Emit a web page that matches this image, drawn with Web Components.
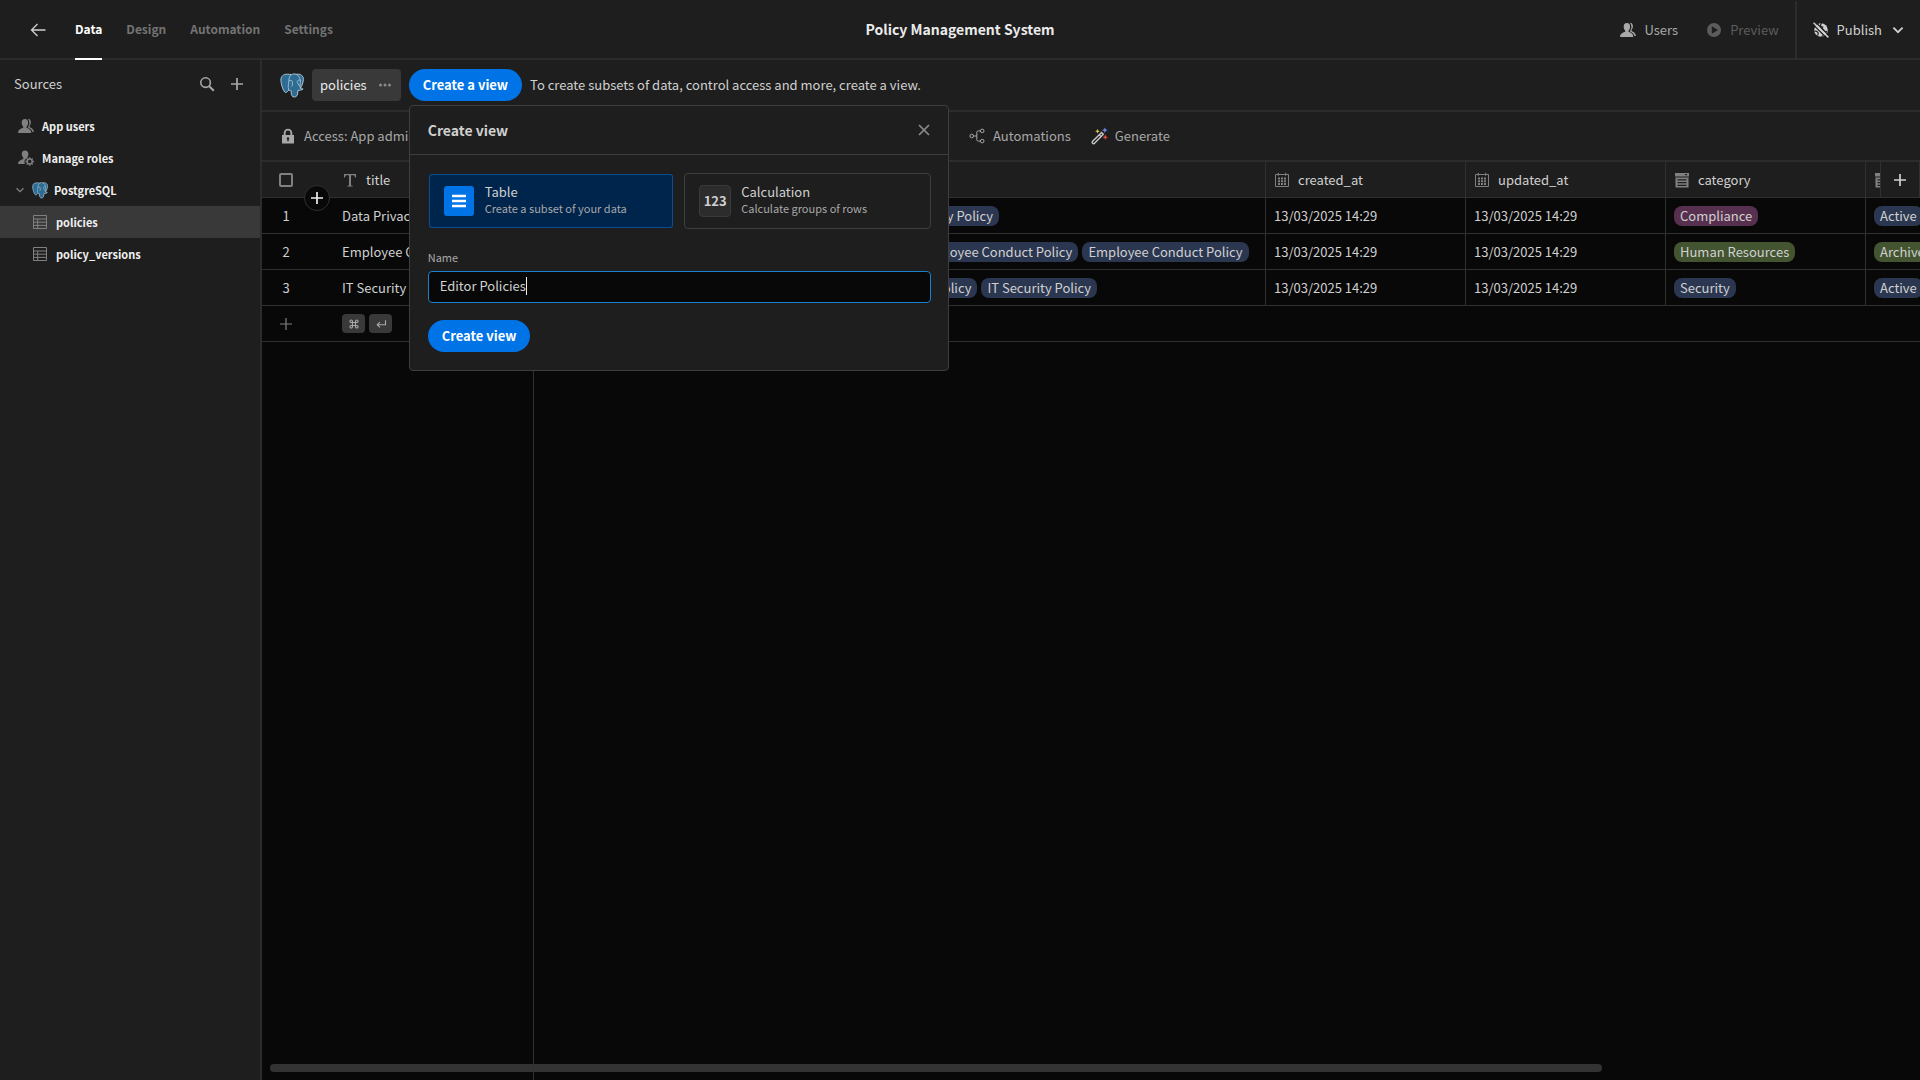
<!DOCTYPE html>
<html lang="en">
<head>
<meta charset="utf-8">
<title>Policy Management System</title>
<style>
:root {
	--bg-panel: #1e1e1e;
	--bg-grid: #080808;
	--bg-raised: #393939;
	--border: #2c2c2c;
	--border-strong: #3e3e3e;
	--text: #d0d0d0;
	--text-bright: #ebebeb;
	--text-muted: #a8a8a8;
	--text-dim: #737373;
	--accent: #0073e6;
	--size-s: 11px;
	--size-tab: 12px;
	--size-m: 13px;
	--size-l: 14px;
}

html, body {
	height: 100%;
	margin: 0;
}

body {
	background: var(--bg-grid);
	color: var(--text);
	font: 400 13px/20px "Noto Sans CJK SC", "Open Sans", sans-serif;
	overflow: hidden;
}
</style>
</head>
<body>
<policy-app></policy-app>

<script>
(() => {

const reset = `
* {
	box-sizing: border-box;
}

button, input {
	margin: 0;
	padding: 0;
	border: 0;
	background: none;
	color: inherit;
	font: inherit;
}

button {
	cursor: pointer;
	white-space: nowrap;
}

a {
	color: inherit;
	text-decoration: none;
}
`;

const icons = {
	back: '<path d="M15.5 8H1.5M7.5 2L1.5 8l6 6" fill="none" stroke="currentColor" stroke-width="1.3"/>',
	search: '<circle cx="6.6" cy="6.6" r="4.8" fill="none" stroke="currentColor" stroke-width="1.6"/><path d="M10.2 10.2l4.6 4.6" stroke="currentColor" stroke-width="2"/>',
	plus: '<path d="M8 2v12M2 8h12" stroke="currentColor" stroke-width="1.7"/>',
	thin_plus: '<path d="M8 2v12M2 8h12" stroke="currentColor" stroke-width="1.2"/>',
	close: '<path d="M3 3l10 10M13 3L3 13" stroke="currentColor" stroke-width="1.7"/>',
	chevron: '<path d="M3.4 5.6L8 10.2l4.6-4.6" fill="none" stroke="currentColor" stroke-width="1.8"/>',
	more: '<circle cx="3.500" cy="8" r="1.500" fill="currentColor"/><circle cx="8" cy="8" r="1.500" fill="currentColor"/><circle cx="12.500" cy="8" r="1.500" fill="currentColor"/>',
	users: '<path d="M6.9 1C4.7 1 3.6 2.7 3.7 4.9c.1 1.7.8 2.9 1.5 3.8v1.1C3.5 10.6.2 11 .1 14.900h13.200c-.2-3.700-3.200-4.300-4.800-5.100V8.700c.8-.9 1.500-2.100 1.600-3.800C10.200 2.700 9.100 1 6.900 1z" fill="currentColor"/><path d="M9.700.7c2.400-.1 3.300 1.700 3.200 3.800-.1 1.700-.8 2.700-1.400 3.600v.9c1.500.9 4.200 1.600 4.400 5.100h-1.500c-.4-2.500-2.300-3.200-4.300-4.500V8.500c.8-.9 1.300-2.200 1.300-3.600 0-1.800-.6-3.300-1.700-4.200z" fill="currentColor"/>',
	user_gear: '<path d="M6.900.4C4.800.4 3.700 2 3.800 4.100c.1 1.700.8 2.900 1.500 3.700v1.100C3.600 9.700.2 10.100.1 14h6.800a5 5 0 0 1 2.500-6.300c.4-.8.9-1.900 1-3.600C10.500 2 9.100.4 6.900.4z" fill="currentColor"/><circle cx="11.700" cy="11.500" r="2.500" fill="none" stroke="currentColor" stroke-width="1.400"/><path d="M11.700 7.200v1.600M11.700 14.200v1.600M7.400 11.500H9M14.400 11.500H16M8.700 8.500l1.100 1.100M13.600 13.400l1.100 1.100M14.700 8.500l-1.100 1.100M9.800 13.400l-1.100 1.100" stroke="currentColor" stroke-width="1.300"/>',
	preview: '<path fill-rule="evenodd" d="M8 1a7 7 0 1 1 0 14A7 7 0 0 1 8 1zM5.800 4.300v7.400L12 8z" fill="currentColor"/>',
	publish: '<circle cx="8" cy="8" r="6.800" fill="currentColor"/><path d="M8.600 1l-1.200 2 .8 1.700 1.500.4-.6 1.700 2.200 1.700M1.200 9l2.700.4 1.300 1.800-.4 2.500M12.200 9.300l1.800.2M9.700 13.500l-1 1.500" fill="none" stroke="#1e1e1e" stroke-width="1.200"/><path d="M0 2.400L13.600 16M2.400 0L16 13.600" stroke="#1e1e1e" stroke-width="1.300"/><path d="M.6.800l14.800 14.600" stroke="currentColor" stroke-width="1.500"/>',
	lock: '<path fill-rule="evenodd" d="M2 7h1.700V5a4.300 4.300 0 0 1 8.600 0v2H14v8.500H2zM5.600 7h4.800V5a2.400 2.400 0 0 0-4.800 0zM8 9.200a1.300 1.300 0 0 0-.7 2.400v1.700h1.400v-1.700A1.300 1.300 0 0 0 8 9.200z" fill="currentColor"/>',
	automations: '<g fill="none" stroke="currentColor"><circle cx="2.700" cy="8" r="1.800"/><circle cx="13.200" cy="2.900" r="1.800"/><circle cx="13.200" cy="13.100" r="1.800"/><path d="M4.500 8h3.300M11.400 2.900H9.300c-1 0-1.500.5-1.500 1.500v7.200c0 1 .5 1.500 1.500 1.500h2.100"/></g>',
	wand: '<path d="M10.600 4.600l1.700 1.700-9 9.200c-1 .9-2.900-.8-1.900-1.900z" fill="none" stroke="#c8c8c8" stroke-width="1.400"/><path d="M8.300 6.900l1.700 1.600" stroke="#c8c8c8" stroke-width="1.200"/><path d="M6.500 1l.7 1.600 1.600.7-1.600.7-.7 1.600-.7-1.600-1.600-.7 1.600-.7z" fill="#d4c848"/><path d="M13.800-.6l.9 1.900 1.900.9-1.900.9-.9 1.900-.9-1.900-1.900-.9 1.900-.9z" fill="#6d86dc"/><path d="M14.300 6.600l.8 1.900 1.900.8-1.900.8-.8 1.900-.8-1.900-1.900-.8 1.900-.8z" fill="#e2503f"/>',
	text: '<path d="M2 2h12v3.500h-1c-.2-1.700-.6-2.200-1.800-2.200H9v9.500c0 .7.500.9 1.700 1v.8H5.300v-.8c1.200-.1 1.700-.3 1.700-1V3.300H4.800C3.600 3.300 3.200 3.800 3 5.500H2z" fill="currentColor"/>',
	calendar: '<path d="M1.500 2.500h13v12h-13zM4.300.8v3M11.700.8v3" fill="none" stroke="currentColor"/><path d="M4 5.500h2v2H4zM7 5.500h2v2H7zM10 5.500h2v2h-2zM4 8.300h2v2H4zM7 8.300h2v2H7zM10 8.300h2v2h-2zM4 11h2v2H4zM7 11h2v2H7zM10 11h2v2h-2z" fill="currentColor"/>',
	options: '<path fill-rule="evenodd" d="M1 1h14v3.500H1zM10.500 2l1.500 1.700L13.500 2z" fill="currentColor"/><path fill-rule="evenodd" d="M1.500 5.500h13v10h-13zM3.500 7.200v1.300h9V7.200zM3.500 10v1.300h9V10zM3.500 12.700V14h9v-1.300z" fill="currentColor"/>',
	table: '<path d="M1.500 1.500h13v13h-13zM1.500 5h13M1.500 8.200h13M1.500 11.400h13M5.700 5v9.500" fill="none" stroke="currentColor"/>',
	rows: '<path d="M1 3h14M1 8h14M1 13h14" stroke="currentColor" stroke-width="2.600"/>',
	command: '<path d="M6 6V4.300A1.700 1.700 0 1 0 4.300 6h7.400A1.700 1.700 0 1 0 10 4.300v7.400a1.700 1.700 0 1 0 1.700-1.700H4.300A1.700 1.700 0 1 0 6 11.700z" fill="none" stroke="currentColor" stroke-width="1.500"/>',
	enter: '<path d="M14 3v6H3M6.500 5.500L3 9l3.500 3.500" fill="none" stroke="currentColor" stroke-width="1.500"/>',
	postgres: '<path d="M5 .8C2.200.7.500 2.200.6 5c.1 2.500 1.300 6.200 2.500 7.600.7.700 1.200.4 1.900-.3l.9-.9c.8.400 1.600.4 1.600.4-.2 1.800.1 3.500 1.100 4 1.300.6 2.900-.1 3.100-1.800l.3-2.500c1 .1 2.500 0 3.400-.9-.9 0-1.500-.1-1.700-.5 1.300-2.100 2.400-5.800 1.700-7.300C14.500.9 12.600.5 11 .9 9.600.4 8.700.6 7.700 1.100 6.900.9 6 .8 5 .8z" fill="#2f6c93" stroke="#b9d0de" stroke-width=".6"/><path d="M7.700 1.100C6.300 2 5.900 3.700 5.900 5.200c0 2.400-1 3.800.1 6.200M5.900 5.400c.8-.6 1.900-.6 2.300.3.300 1 .2 2.300-.4 3.300M11 .9c1.700 1 2.400 2.600 2.600 4.300.2 1.600-.7 2.800 0 5.200M13.500 4.900c-.9-.3-1.800-.1-2 .7-.1 1 .9 2.200 1.700 3.200" fill="none" stroke="#b9d0de" stroke-width=".5"/>'
};

function define(name, styles, template, setup) {
	customElements.define(name, class extends HTMLElement {
		constructor() {
			super();
			this.attachShadow({ mode: 'open' });
		}

		connectedCallback() {
			const markup = typeof template === 'function' ? template(this) : template;
			this.shadowRoot.innerHTML = `<style>${reset}${styles}</style>${markup}`;

			if (setup) {
				setup(this);
			}
		}
	});
}

define('ui-icon', `
:host {
	display: inline-block;
	flex: none;
	width: 16px;
	height: 16px;
}

:host([size="s"]) {
	width: 12px;
	height: 12px;
}

:host([size="l"]) {
	width: 24px;
	height: 24px;
}

svg {
	display: block;
	width: 100%;
	height: 100%;
	overflow: visible;
}
`, (el) => `<svg viewBox="0 0 16 16" aria-hidden="true">${icons[el.getAttribute('name')]}</svg>`);

define('ui-button', `
:host {
	display: inline-block;
	flex: none;
}

button {
	height: 32px;
	padding: 0 14px;
	border-radius: 16px;
	background: var(--accent);
	color: #fff;
	font-weight: 700;
	display: block;
}
`, '<button type="button"><slot></slot></button>');

define('ui-tag', `
:host {
	display: block;
	flex: none;
	height: 20px;
	padding: 0 6px;
	border-radius: 8px;
	background: #2b3750;
	line-height: 20px;
	white-space: nowrap;
}

:host([color="purple"]) {
	background: #57304f;
}

:host([color="green"]) {
	background: #435430;
}
`, '<slot></slot>');

define('app-header', `
:host {
	display: grid;
	grid-template-columns: 1fr auto 1fr;
	height: 60px;
	flex: none;
	background: var(--bg-panel);
	border-bottom: 2px solid var(--border);
}

nav {
	display: flex;
	align-items: center;
	gap: 24px;
	padding-left: 30px;
	font-size: var(--size-tab);
	font-weight: 700;
	color: var(--text-dim);
}

nav button {
	color: var(--text);
	margin-right: 5px;
	display: flex;
}

nav a {
	height: 60px;
	line-height: 58px;
	align-self: start;
}

nav a[aria-current] {
	color: #fff;
	border-bottom: 2px solid #fff;
}

h1 {
	margin: 0;
	font-size: var(--size-l);
	font-weight: 700;
	line-height: 58px;
	color: var(--text-bright);
}

.actions {
	display: flex;
	justify-content: flex-end;
	align-items: center;
	gap: 28px;
	color: var(--text-muted);
}

.actions button {
	display: flex;
	align-items: center;
	gap: 8px;
}

.actions button:disabled {
	color: #5c5c5c;
}

.actions .publish {
	height: 58px;
	margin-left: -12px;
	padding: 0 14px 0 16px;
	border-left: 2px solid var(--border);
	color: var(--text);
}
`, `
<nav>
	<button type="button" aria-label="Back"><ui-icon name="back"></ui-icon></button>
	<a href="#data" aria-current="page">Data</a>
	<a href="#design">Design</a>
	<a href="#automation">Automation</a>
	<a href="#settings">Settings</a>
</nav>
<h1>Policy Management System</h1>
<div class="actions">
	<button type="button"><ui-icon name="users"></ui-icon>Users</button>
	<button type="button" disabled><ui-icon name="preview"></ui-icon>Preview</button>
	<button type="button" class="publish"><ui-icon name="publish"></ui-icon>Publish<ui-icon name="chevron"></ui-icon></button>
</div>
`);

define('source-item', `
:host {
	display: block;
}

a {
	display: flex;
	align-items: center;
	gap: 8px;
	height: 32px;
	padding-left: 18px;
	font-size: var(--size-s);
	font-weight: 700;
	color: #f0f0f0;
}

ui-icon {
	color: #808080;
}

:host([level="source"]) a {
	padding-left: 14px;
	gap: 6px;
}

:host([level="table"]) a {
	padding-left: 32px;
}

:host([selected]) a {
	background: var(--bg-raised);
}
`, (el) => `
<a href="#${el.textContent.trim()}">
	${el.getAttribute('level') === 'source' ? '<ui-icon name="chevron" size="s"></ui-icon>' : ''}
	<ui-icon name="${el.getAttribute('icon')}"></ui-icon>
	<slot></slot>
</a>
`);

define('source-list', `
:host {
	display: block;
	flex: 0 0 262px;
	box-sizing: border-box;
	background: var(--bg-panel);
	border-right: 2px solid var(--border);
}

header {
	display: flex;
	align-items: center;
	gap: 14px;
	height: 48px;
	margin-bottom: 2px;
	padding: 0 15px 0 14px;
}

h2 {
	flex: 1;
	margin: 0;
	font-size: var(--size-m);
	font-weight: 400;
}

button {
	display: flex;
	color: var(--text-muted);
}
`, `
<header>
	<h2>Sources</h2>
	<button type="button" aria-label="Search"><ui-icon name="search"></ui-icon></button>
	<button type="button" aria-label="Add source"><ui-icon name="plus"></ui-icon></button>
</header>
<source-item icon="users">App users</source-item>
<source-item icon="user_gear">Manage roles</source-item>
<source-item icon="postgres" level="source">PostgreSQL</source-item>
<source-item icon="table" level="table" selected>policies</source-item>
<source-item icon="table" level="table">policy_versions</source-item>
`);

define('view-card', `
:host {
	display: block;
	flex: 1;
}

button {
	display: flex;
	align-items: center;
	gap: 10px;
	width: 100%;
	height: 56px;
	padding: 0 14px;
	border: 1px solid var(--border-strong);
	border-radius: 4px;
	text-align: left;
}

.icon {
	display: flex;
	align-items: center;
	justify-content: center;
	width: 32px;
	height: 32px;
	border: 1px solid #3a3a3a;
	border-radius: 4px;
	background: #2c2c2c;
	font-weight: 700;
}

.name, .info {
	display: block;
}

.name {
	line-height: 16px;
}

.info {
	padding-bottom: 2px;
	font-size: var(--size-s);
	line-height: 16px;
	color: var(--text-muted);
}

:host([selected]) button {
	border-color: transparent;
	background: #00254d;
	background-clip: padding-box;
	box-shadow: inset 0 0 0 1px #0b4d94;
}

:host([selected]) .icon {
	border-color: transparent;
	background: var(--accent);
	background-clip: padding-box;
	color: #fff;
}
`, (el) => `
<button type="button" aria-pressed="${el.hasAttribute('selected')}">
	<span class="icon"><slot name="icon"></slot></span>
	<span>
		<span class="name"><slot></slot></span>
		<span class="info"><slot name="info"></slot></span>
	</span>
</button>
`);

define('create-view-popover', `
:host {
	display: block;
	box-sizing: border-box;
	width: 540px;
	border: 1px solid var(--border-strong);
	border-radius: 4px;
	background: var(--bg-panel);
}

header {
	display: flex;
	align-items: center;
	justify-content: space-between;
	height: 49px;
	padding: 0 16px 0 18px;
	border-bottom: 1px solid var(--border-strong);
}

h2 {
	margin: 0;
	font-size: var(--size-l);
	font-weight: 700;
}

header button {
	display: flex;
	color: #8a8a8a;
}

form {
	padding: 18px 17px 18px 18px;
}

.cards {
	display: flex;
	gap: 10px;
}

label {
	display: block;
	margin: 19px 0 5px;
	font-size: var(--size-s);
	line-height: 18px;
	color: var(--text-muted);
}

.field {
	display: flex;
	align-items: center;
	height: 32px;
	margin-bottom: 17px;
	padding: 0 11px 2px;
	border: 1px solid #1b7fcc;
	border-radius: 4px;
	background: var(--bg-grid);
	cursor: text;
}

input {
	field-sizing: content;
	height: 20px;
	outline: 0;
	caret-color: transparent;
}

.caret {
	width: 1px;
	height: 18px;
	background: var(--text-bright);
}
`, `
<header>
	<h2>Create view</h2>
	<button type="button" aria-label="Close"><ui-icon name="close"></ui-icon></button>
</header>
<form>
	<div class="cards">
		<view-card selected>
			<ui-icon slot="icon" name="rows"></ui-icon>
			Table
			<span slot="info">Create a subset of your data</span>
		</view-card>
		<view-card>
			<span slot="icon">123</span>
			Calculation
			<span slot="info">Calculate groups of rows</span>
		</view-card>
	</div>
	<label for="name">Name</label>
	<div class="field">
		<input id="name" type="text" value="Editor Policies" autocomplete="off" spellcheck="false">
		<span class="caret"></span>
	</div>
	<ui-button>Create view</ui-button>
</form>
`, (el) => {
	const input = el.shadowRoot.querySelector('input');
	el.shadowRoot.querySelector('.field').addEventListener('click', () => input.focus());
});

define('view-bar', `
:host {
	position: relative;
	z-index: 2;
	display: flex;
	align-items: center;
	gap: 8px;
	flex: none;
	height: 52px;
	box-sizing: border-box;
	padding-left: 18px;
	background: var(--bg-panel);
	border-bottom: 2px solid var(--border);
}

.table {
	display: flex;
	align-items: center;
	gap: 10px;
	height: 32px;
	padding: 0 8px;
	border-radius: 4px;
	background: var(--bg-raised);
	color: var(--text-bright);
}

.table ui-icon {
	color: #8a8a8a;
}

.create {
	position: relative;
}

create-view-popover {
	position: absolute;
	top: 36px;
	left: 0;
}
`, `
<ui-icon name="postgres" size="l"></ui-icon>
<button type="button" class="table">policies<ui-icon name="more"></ui-icon></button>
<div class="create">
	<ui-button>Create a view</ui-button>
	<create-view-popover></create-view-popover>
</div>
<span>To create subsets of data, control access and more, create a view.</span>
`);

define('grid-toolbar', `
:host {
	display: flex;
	align-items: center;
	gap: 20px;
	flex: none;
	height: 50px;
	box-sizing: border-box;
	padding-left: 18px;
	background: var(--bg-panel);
	border-bottom: 2px solid var(--border);
	color: var(--text-muted);
}

button {
	display: flex;
	align-items: center;
	gap: 8px;
}

.access {
	flex: 0 0 669px;
}
`, `
<div class="access">
	<button type="button"><ui-icon name="lock"></ui-icon>Access: App admin</button>
</div>
<button type="button"><ui-icon name="automations"></ui-icon>Automations</button>
<button type="button"><ui-icon name="wand"></ui-icon>Generate</button>
`);

const rows = [
	{ title: 'Data Privacy Policy', links: 2, category: 'Compliance', color: 'purple', status: 'Active' },
	{ title: 'Employee Conduct Policy', links: 3, category: 'Human Resources', color: 'green', status: 'Archived' },
	{ title: 'IT Security Policy', links: 3, category: 'Security', color: 'blue', status: 'Active' }
];

const row_template = (row, index) => `
<tr>
	<td class="gutter"><span>${index + 1}</span></td>
	<td>${row.title}</td>
	<td></td>
	<td><div class="tags">${`<ui-tag>${row.title}</ui-tag>`.repeat(row.links)}</div></td>
	<td>13/03/2025 14:29</td>
	<td>13/03/2025 14:29</td>
	<td><div class="tags"><ui-tag color="${row.color}">${row.category}</ui-tag></div></td>
	<td><div class="tags"><ui-tag color="${row.status === 'Archived' ? 'green' : 'blue'}">${row.status}</ui-tag></div></td>
</tr>
`;

const heading = (icon, name) => `<th><div class="heading"><ui-icon name="${icon}"></ui-icon>${name}</div></th>`;

define('data-grid', `
:host {
	position: relative;
	display: block;
	flex: 1;
	min-height: 0;
	overflow: hidden;
	background: var(--bg-grid);
}

/* edge of the frozen title column */
:host::after {
	content: "";
	position: absolute;
	top: 0;
	bottom: 0;
	left: 271px;
	width: 1px;
	background: #303030;
}

table {
	width: 1804px;
	table-layout: fixed;
	border-collapse: separate;
	border-spacing: 0;
}

th, td {
	height: 36px;
	padding: 0 8px;
	border-right: 1px solid #303030;
	border-bottom: 1px solid #303030;
	font-weight: 400;
	text-align: left;
	white-space: nowrap;
	overflow: hidden;
}

th {
	background: var(--bg-panel);
}

.gutter, .add td {
	border-right: 0;
}

.gutter {
	position: relative;
	padding: 0 24px 0 0;
	overflow: visible;
}

.gutter > * {
	display: block;
	margin: 0 auto;
	text-align: center;
}

.gutter ui-icon, .heading ui-icon {
	color: #808080;
}

input {
	appearance: none;
	width: 14px;
	height: 14px;
	border: 2px solid #808080;
	border-radius: 2px;
}

.gutter .insert {
	position: absolute;
	right: 4px;
	bottom: -14px;
	z-index: 1;
	display: flex;
	align-items: center;
	justify-content: center;
	width: 26px;
	height: 26px;
	border: 1px solid #303030;
	border-radius: 50%;
	background: var(--bg-grid);
}

.gutter .insert ui-icon {
	color: var(--text-bright);
}

.heading {
	display: flex;
	align-items: center;
	gap: 8px;
}

.tags, .keys {
	display: flex;
	gap: 4px;
}

kbd {
	display: flex;
	align-items: center;
	justify-content: center;
	width: 23px;
	height: 19px;
	border-radius: 4px;
	background: var(--bg-raised);
	color: var(--text-muted);
}

.new-column {
	position: absolute;
	top: 0;
	right: 0;
	display: flex;
	align-items: center;
	justify-content: center;
	width: 40px;
	height: 36px;
	border: 1px solid #303030;
	border-top: 0;
	background: var(--bg-panel);
}

.scrollbar {
	position: absolute;
	left: 8px;
	right: 318px;
	bottom: 8px;
	height: 8px;
	border-radius: 4px;
	background: #333;
}
`, `
<table>
	<colgroup>
		<col style="width: 72px">
		<col style="width: 200px">
		<col style="width: 200px">
		<col style="width: 532px">
		<col style="width: 200px">
		<col style="width: 200px">
		<col style="width: 200px">
		<col style="width: 200px">
	</colgroup>
	<thead>
		<tr>
			<th class="gutter">
				<input type="checkbox" aria-label="Select all rows">
				<button type="button" class="insert" aria-label="Insert row"><ui-icon name="plus"></ui-icon></button>
			</th>
			${heading('text', 'title')}
			<th></th>
			<th></th>
			${heading('calendar', 'created_at')}
			${heading('calendar', 'updated_at')}
			${heading('options', 'category')}
			${heading('options', '')}
		</tr>
	</thead>
	<tbody>
		${rows.map(row_template).join('')}
		<tr class="add">
			<td class="gutter"><ui-icon name="thin_plus"></ui-icon></td>
			<td colspan="7">
				<div class="keys">
					<kbd><ui-icon name="command" size="s"></ui-icon></kbd>
					<kbd><ui-icon name="enter" size="s"></ui-icon></kbd>
				</div>
			</td>
		</tr>
	</tbody>
</table>
<button type="button" class="new-column" aria-label="Add column"><ui-icon name="plus"></ui-icon></button>
<div class="scrollbar"></div>
`);

define('policy-app', `
:host {
	display: flex;
	flex-direction: column;
	height: 100vh;
}

.body {
	display: flex;
	flex: 1;
	min-height: 0;
}

main {
	display: flex;
	flex-direction: column;
	flex: 1;
	min-width: 0;
}
`, `
<app-header></app-header>
<div class="body">
	<source-list></source-list>
	<main>
		<view-bar></view-bar>
		<grid-toolbar></grid-toolbar>
		<data-grid></data-grid>
	</main>
</div>
`);

})();
</script>
</body>
</html>
